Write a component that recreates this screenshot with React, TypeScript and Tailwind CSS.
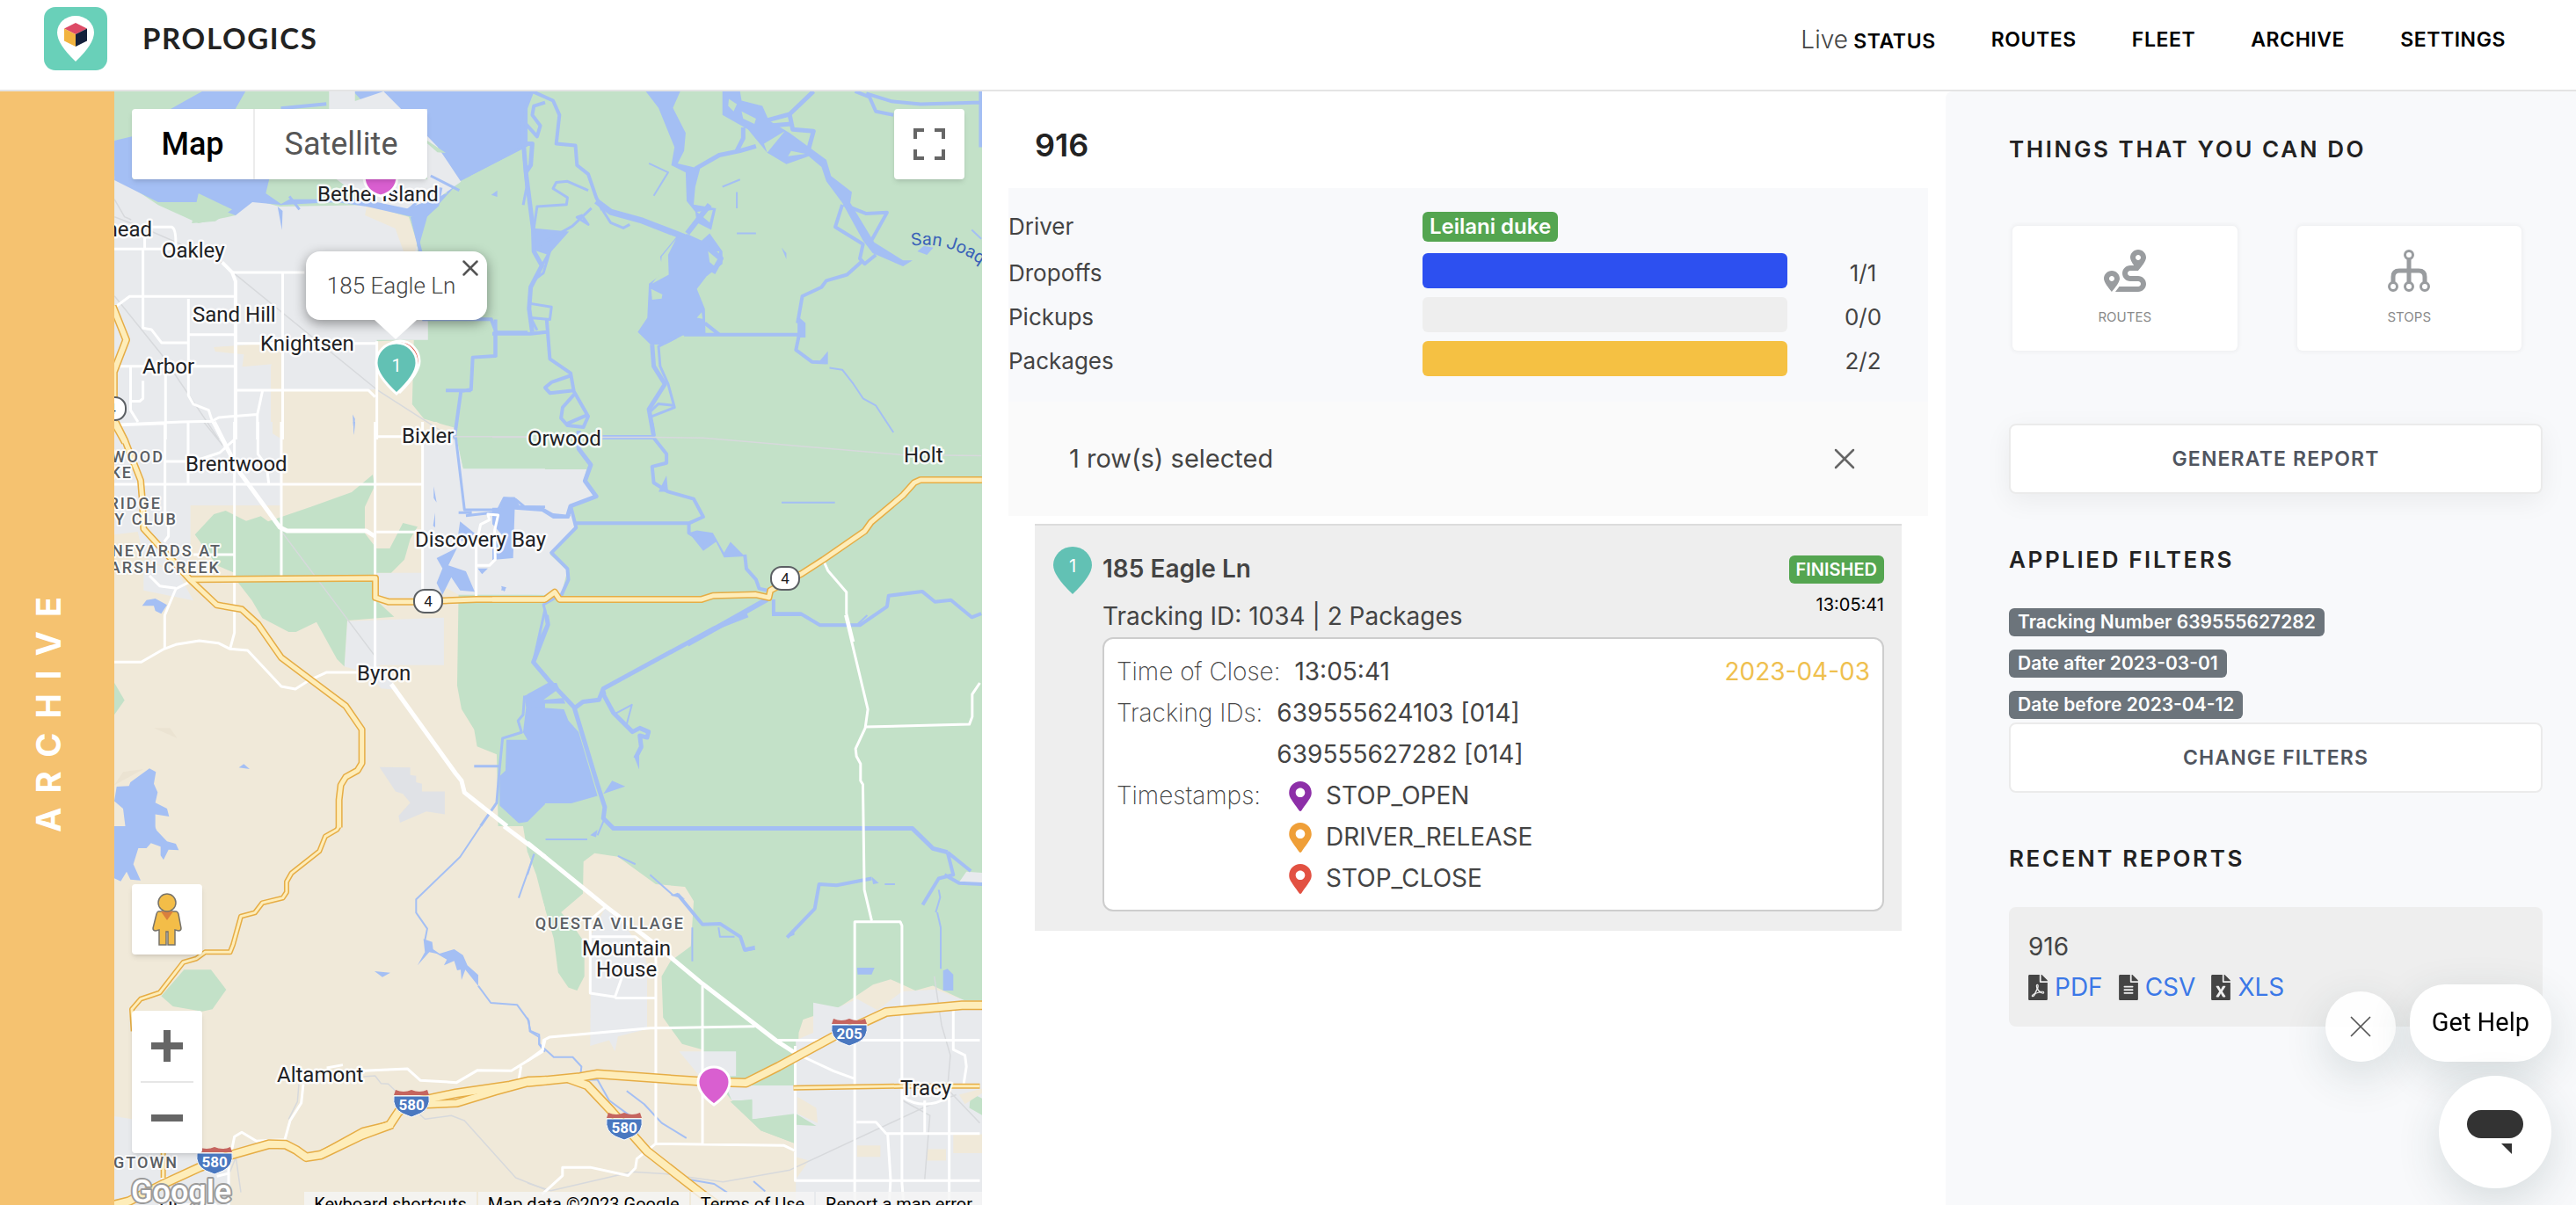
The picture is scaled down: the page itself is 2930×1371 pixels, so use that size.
import type { ReactNode } from "react"
import { X } from "lucide-react"
import { FaFileAlt, FaFileExcel, FaFilePdf, FaMapMarkerAlt, FaRoute } from "react-icons/fa"

const PARK = "#c3e1c8"
const SAND = "#f0e9d9"
const TOWN = "#e8eaed"
const WATER = "#a4bff4"

// every tile has its own drawing units, these place them on the map
const tiles = {
  nw: "scale(.3827 .3333)",
  ne: "translate(560 90) scale(.3635 .4082)",
  w: "translate(120 480) scale(.3333)",
  se: "translate(600 700) scale(.3317 .4279)",
  sw: "translate(120 940) scale(.3333)",
}

type Tile = keyof typeof tiles

const areas: [Tile, string, string][] = [
  // land
  ["nw", TOWN, "M340 600L470 700 590 762 700 735 750 680 830 705 1090 700 1180 730 1250 860 1272 1100V1160H1120V1500H340Z"],
  ["nw", SAND, "M1090 700L1215 740 1240 830 1225 900 1200 860 1175 780 1085 735Z"],
  ["nw", SAND, "M635 1185L820 1170 840 1240 720 1252 725 1210 640 1200ZM805 1250L840 1170V1330H1115L1120 1165 1230 1160 1225 1380 1260 1430 1350 1460V1500H805Z"],
  ["w", SAND, "M30 0H1130L1190 40 1220 160 1205 580 1200 900 1215 980 1258 1050 1268 1108 1335 1135 1340 1380H30Z"],
  ["w", TOWN, "M30 0H570V40L603 60V285H290V460L250 520 130 460 110 375 30 385ZM130 470L250 520 300 610 130 575Z"],
  ["w", TOWN, "M1085 40H1195L1220 160H1500V590H1205L1150 560V600H925V515H1080Z"],
  ["ne", TOWN, "M0 1088H295L285 1120 325 1165 240 1190 265 1250 180 1325 235 1370 215 1440 0 1430Z"],
  ["w", TOWN, "M825 680L1155 668V830H930L1000 915 940 910 900 860 815 835Z"],
  ["w", "#e0e2e6", "M935 1178L1040 1180V1205L1060 1208V1230L1080 1235V1262H1158V1340L1095 1330 1005 1368 1000 1345 1040 1300 1015 1270 990 1262Z"],
  ["w", PARK, "M305 385L370 315 410 303 480 338 530 322 555 340 700 290 840 240 912 180 918 220 885 290V380L925 432H970L1015 345 1065 358 1040 400 1020 470 975 515H925V610L985 665 825 678 815 835 790 810 720 683 650 717H625L535 670 500 610 450 545 440 515 380 490Z"],
  ["w", PARK, "M30 890L65 950 30 1000Z"],
  ["w", "#ebe3d2", "M165 1045H220L245 1080ZM60 1195L130 1185 30 1240Z"],
  ["sw", SAND, "M30 0H1425L1440 90 1500 280V1293H30Z"],
  ["sw", PARK, "M190 580L268 490H360L412 558 365 625 330 632 230 615Z"],
  ["sw", TOWN, "M30 990L90 1000V1100H340L425 1180V1293H30Z"],
  ["se", SAND, "M0 630L30 690 60 780 90 860 105 950 140 990 170 998 195 960V870L160 830 115 790 190 740 192 655 230 633 310 642 440 715 540 722 570 760 560 880 490 920 460 960 465 1070 530 1140 600 1155 640 1230 700 1290 800 1370 920 1405V1568H0Z"],
  ["se", SAND, "M930 1110L945 1075 1070 1042 1185 982 1245 968 1330 998 1390 985 1500 1025H1560V1568H920V1350Z"],
  ["se", TOWN, "M980 1030L1065 1043 1130 1020 1200 1050 1285 1000 1400 995 1500 1025H1560V1568H920V1330L770 1340V1290H700L680 1250H920V1130L980 1110Z"],
  ["se", TOWN, "M520 1160H715V1225H590ZM218 850L265 780 330 820 400 900 410 930V1100L310 1120 300 1160 280 1130 215 1145Z"],
  ["se", PARK, "M695 1293L770 1287V1340L920 1325 990 1358 920 1355V1405L800 1370ZM1520 1270L1560 1285V1330L1515 1310Z"],
  ["se", SAND, "M920 1440L965 1450 920 1500ZM925 1280L990 1310 995 1350 925 1325ZM1130 1410H1210V1440H1130ZM1370 1420H1435V1450H1370ZM1460 1380H1560V1430H1460ZM1480 1275L1560 1258V1270L1500 1300Z"],
  // water
  ["nw", WATER, "M600 312H730L700 372H500ZM340 480L395 465V612H800L790 660 840 700 750 690 700 735 600 690 470 690 340 615Z"],
  ["nw", PARK, "M730 312H975V360L850 372H700ZM340 312H600L340 480ZM590 660L690 715 640 755 570 762Z"],
  ["nw", WATER, "M1050 312H1568V500L1365 620 1270 740 1250 860 1225 740 1090 705 1000 690 830 700 860 680 1060 680 1200 700 1330 660Z"],
  ["nw", TOWN, "M978 312H1055V345L1140 312 1190 370 1300 500 1370 620 1310 670 1210 712 1080 680 1000 612H1270V372H978Z"],
  ["nw", PARK, "M1270 480L1325 522 1300 520 1270 490ZM1568 500L1400 600 1270 740 1240 860 1440 880H1568Z"],
  ["nw", WATER, "M825 705L840 720 838 785ZM1048 1415L1055 1430 1052 1485ZM1460 665L1478 650 1478 672Z"],
  ["ne", WATER, "M0 34H125L90 120 85 190 0 230ZM480 34H588L565 80 605 150 600 200 580 235 650 250 635 300 630 350 700 360 685 420 640 400 635 370 608 340 605 260 560 240 570 190 520 80ZM720 34H775L780 60 845 75 865 115 930 150 1045 225 1060 270 1125 315 1120 345 1195 455 1285 505 1315 505 1285 522 1190 485 1160 450 1095 345 1045 285 1030 245 990 215 920 237 860 205 800 140 720 100Z"],
  ["ne", PARK, "M740 55L765 70 755 90 738 75ZM780 90L825 110 820 125 785 110ZM850 180L915 145 860 205ZM935 200L980 208 925 215ZM945 140L990 140 985 180ZM640 370L690 365 680 400Z"],
  ["ne", WATER, "M580 435L610 432 655 450 680 430 720 480 720 515 670 550 640 585 665 640 667 710 595 715 540 740 495 740 455 705 485 665 490 570 535 540 525 495ZM125 415L240 425 175 490 125 475Z"],
  ["ne", PARK, "M575 445L550 490 552 545 500 570 525 540 530 495ZM497 585L532 600 530 612 500 615ZM640 665L655 650 658 668ZM675 480L710 480 700 525 680 510ZM375 370L410 385 405 405 380 398Z"],
  ["ne", WATER, "M35 1165H70L85 1188 150 1190 190 1210 245 1215 240 1225 190 1225 155 1205 70 1200 65 1335 0 1340V1290L40 1280 0 1240V1195H25ZM615 1265L640 1258 690 1265 725 1320 745 1290 790 1330 725 1333 700 1290 660 1315ZM1020 790L1050 758V795ZM1330 480L1350 465 1380 470 1360 490ZM545 1105L550 1150 520 1150ZM30 1415L42 1425 28 1425ZM955 660L980 680V720H955ZM905 470L920 485V502Z"],
  ["w", WATER, "M1210 340L1260 380 1240 400 1200 410ZM1130 465L1200 430 1170 490 1230 510 1260 580 1210 575 1180 530 1150 590 1130 550 1150 500ZM1350 560L1368 565 1360 580ZM1120 220L1130 275 1120 260ZM1125 310V360L1118 355ZM1270 500H1305L1285 520Z"],
  ["w", WATER, "M125 628L140 608 170 603 210 625 190 655 170 645 165 628ZM455 1180L472 1168 492 1185ZM845 0H852L848 45ZM30 1295L38 1245 80 1243 85 1230 150 1183 172 1195 165 1235 178 1265 170 1300 210 1320 217 1347 170 1340V1400H70L60 1320Z"],
  ["w", WATER, "M1500 900L1430 935 1435 975 1425 1060 1440 1085H1368L1365 1190 1345 1210V1310L1410 1370 1440 1365 1500 1305Z"],
  ["se", WATER, "M0 243L125 250 140 280 175 310 240 480 150 500H50L0 545ZM0 210L70 180 100 180 130 235 30 235ZM240 220L265 195 270 210ZM290 440L335 455 260 475ZM365 375L383 360V410ZM215 585L240 570 235 590ZM1130 937H1190L1180 955H1132ZM1425 945L1440 940 1460 955V998H1425ZM490 745L515 738 540 755ZM740 885L780 878 775 890 745 895ZM890 857L915 835V850ZM1180 695L1205 712 1185 715Z"],
  ["se", PARK, "M55 225L100 200 120 220Z"],
  ["se", TOWN, "M1480 710L1505 682 1560 685V715Z"],
  ["sw", WATER, "M30 0H168L175 15 210 52 240 60 250 82 215 80 198 115 188 100V70L155 58 140 75H112L95 130 120 185 85 182 72 155 52 188 30 178Z"],
  ["sw", WATER, "M1065 475L1090 430 1085 385 1115 395 1118 420 1140 435 1190 420 1220 440 1235 475 1272 508V545L1228 490 1215 525 1212 490 1200 492 1190 460 1155 475 1165 455 1130 435 1105 430ZM918 495L972 500 945 515Z"],
]

const streams: [Tile, number, string][] = [
  ["ne", 4, "M125 34L190 60 210 100 200 180 260 185 265 240 300 265 325 330 345 365"],
  ["ne", 4, "M125 34L105 80 100 120 140 160 150 130 125 100 130 75 165 65"],
  ["ne", 7, "M325 340L370 370 470 395 600 440"],
  ["ne", 3, "M345 365L370 400 410 415 430 405M310 360L250 410 130 470M300 310L235 285 200 288 190 305 235 330 232 350 140 355 130 415M265 385L300 405 280 380Z"],
  ["ne", 5, "M92 120L105 260 128 420 130 480 155 520 120 580 115 640 125 705M100 180H125L120 240 105 260"],
  ["ne", 3, "M155 520L180 480 160 540 130 560M115 625L185 635 180 670 120 665 140 700"],
  ["ne", 4, "M0 710H120L170 705M10 670V775M170 670L180 780 245 820 255 870 300 940 285 970 235 965 215 945 220 915 260 875M250 825L185 845 165 860 180 875 255 868M235 960L300 935"],
  ["ne", 5, "M270 980V1030L308 1075 290 1120 325 1163 245 1190 235 1220"],
  ["ne", 4, "M245 1190L262 1250 185 1320 235 1365 238 1395 215 1440M260 1238H615L660 1220 630 1170 550 1150 505 1125 500 1080 545 1070 545 1045 505 1000 500 960"],
  ["ne", 5, "M500 740L505 800 540 850 490 920 505 995M345 998H505"],
  ["ne", 3, "M575 720L520 745 525 800 550 850 570 915 500 940M490 930L520 905 570 910"],
  ["ne", 4, "M600 712H960L950 755 1000 788 1045 790M665 680L710 712M955 680L970 605 1030 580 1045 562 1110 545 1160 505"],
  ["ne", 5, "M635 250L710 212 775 200 825 187M765 200L785 165V135M860 115L930 98 1005 34M930 98L940 140 1005 145 985 210M870 130L935 125"],
  ["ne", 4, "M1100 350L1170 375 1235 372 1180 460M1095 350L1073 412 1160 460 1150 500 1165 515 1200 490"],
  ["ne", 4, "M1135 34L1180 50 1200 90 1255 100M1170 40L1250 62 1340 70 1530 65M1528 34V190"],
  ["ne", 2, "M490 235L550 260 505 325M720 300L775 280M765 315V360M765 430L825 430M905 1180H1072M1055 805L1095 810 1130 850 1160 890 1200 910 1255 985M1500 420L1530 445"],
  ["ne", 4, "M615 1240V1265L680 1300M790 1325L795 1365 825 1395 835 1420 860 1425M880 1450V1490H965L1025 1522H1150L1235 1470 1240 1440 1345 1428 1385 1457 1435 1452 1500 1500 1530 1490"],
  ["ne", 6, "M860 1450L700 1530 610 1575M675 470L715 500 690 540M610 430L680 350"],
  ["ne", 3, "M210 1440L160 1465 175 1515 145 1568"],
  ["nw", 4, "M1255 1090H1460L1475 1135H1568M1472 1130V1215L1405 1220 1400 1330 1370 1335 1350 1500M1325 1333H1400M1225 740L1250 860M1260 740L1300 700 1310 640M835 370L970 355"],
  ["nw", 3, "M1165 710L1210 720 1240 690M1280 600L1365 650M860 670L890 715M1555 500L1565 640 1555 700"],
  ["w", 3, "M1195 50L1225 300H1340L1360 260 1400 265 1430 290 1500 290M1205 310H1250M1230 320L1320 310"],
  ["w", 3, "M1500 640L1460 820 1500 870M1430 935L1425 1000 1408 1020 1420 1060 1355 1080 1345 1180 1335 1300 1280 1380M1258 1175H1345"],
  ["se", 5, "M65 0L70 25 20 125 75 175 160 245 240 450 265 510 260 540 295 567H1320L1390 620 1440 630"],
  ["se", 5, "M755 0L640 35 260 195 245 225 190 230 165 245M260 210L295 260 360 310 385 300 415 310 410 325 385 320 390 350 370 380"],
  ["se", 2, "M300 262L358 238 340 290M62 596H205M240 585L262 545M838 0H950L1000 25H1130L1165 0M310 640L370 662M420 690L500 745M565 830V920"],
  ["se", 4, "M515 742L600 822 660 820 730 855 745 890 780 885M890 857L985 780 1000 715 1060 718 1180 700M1440 630L1520 680M1440 630L1460 690 1410 700 1355 770M1430 690L1480 712 1560 715"],
  ["se", 2, "M1405 790L1417 830V940M655 830L660 855 710 855M1225 715H1260M1410 730L1415 750 1400 790"],
  ["se", 2, "M0 1070L10 1105 40 1115V1140L90 1175 155 1175 185 1200 180 1235 240 1235 280 1290 350 1330M340 1265L400 1300 460 1350 545 1390M550 1500L640 1512 685 1535M775 1505L815 1532M22 635L0 690"],
  ["sw", 2, "M1280 0L1210 105 1060 250V295L1098 350 1090 390M1272 545L1315 603 1405 610 1445 665 1448 700 1480 720V745L1500 770M1463 95L1410 245"],
]

const rails: [Tile, string][] = [
  ["nw", "M340 680L370 740 390 750M340 740L430 780 650 890 1120 1330 1350 1500M340 1010L480 1210 650 1500"],
  ["w", "M335 0L400 80M605 380L920 800M1190 50H1440"],
  ["ne", "M0 998H500L660 1000 1280 1047 1530 1050"],
  ["sw", "M880 855L920 852 940 878 965 880 1090 1000 1180 988 1225 1005 1400 1200 1500 1240M660 880L655 940 625 1000M425 1180L445 1130 462 1250"],
  ["se", "M0 1510L80 1530 360 1480 470 1485 670 1507 900 1475 1370 1305 1470 1275M1395 960L1420 1090 1450 1170 1440 1260 1551 1350M1285 1290L1380 1330 1362 1500"],
]

const streets: [Tile, number, string][] = [
  ["nw", 3, "M340 850H490M425 850V1120L450 1125 480 1170H560M450 775H510Q525 780 522 850M340 1050L385 1012H700M430 800L430 850M340 1250H700M388 1250V1400L410 1440M425 1300V1360L415 1370 390 1370M492 1280V1500M560 1020V1350L575 1380 620 1400 630 1435 660 1500M560 1142H700M690 930H905M840 930V1500M700 1172H1120M1120 1165V1500M702 1332H1095L1115 1355M340 1450L540 1440 630 1438 650 1425 765 1415 780 1335M765 1415V1500"],
  ["nw", 4, "M490 850L520 845M660 895L690 930 700 960V1500"],
  ["w", 3, "M30 12L200 5M30 213H1085M203 0V330L215 350V390L200 410M282 0V210M205 135H300L390 105 440 60M440 0V720L425 775M600 0V525M520 0V110L550 150 557 210M1082 0V600M920 0V840M925 50H1085M925 376H1080M300 453H440M1265 600V420L1280 350 1310 335 1305 315 1340 318 1328 370 1330 470 1310 490H1265"],
  ["w", 3, "M30 820H122L200 775 240 760 320 747 385 755 425 775 485 780 600 903 648 912 690 885 755 855H870M202 775V660L240 570 290 545M150 525L185 560 240 568"],
  ["w", 5, "M370 0L410 80 460 175 595 360 620 372H890L918 390M975 895L1195 1200 1215 1225 1225 1265 1370 1380M920 840L950 870"],
  ["sw", 5, "M1360 0L1500 105"],
  ["sw", 3, "M755 825L810 815M880 835L1030 828 1075 868 1198 875 1270 833 1385 835 1490 770 1500 730M1418 820L1410 870M675 880L668 945 630 1005 612 1070 515 1075 465 1045 440 1060 430 1110M420 1120V1293M190 1200H270M380 1195L420 1185"],
  ["se", 5, "M0 605L270 775 430 870 600 980 860 1135 920 1165"],
  ["se", 3, "M1090 0L1167 250 1158 300 1125 355 1128 375 1142 395V440L1150 450 1155 730 1180 812M1158 297L1515 290 1525 270V210L1551 180M1122 1568V815H1278L1284 825V1510L1290 1568M600 985V1405M440 905V1405M268 775L215 810V1005L300 1015 325 960M215 855H370L440 900M300 1018H440M0 1185L52 1155 55 1130 75 1122 420 1098 780 1093M850 1130H1551M918 1145V1503H1551M920 1165L1050 1212 1120 1232M440 1405L880 1410 920 1425M1128 1348H1195L1230 1378H1551M1235 1378L1245 1500 1240 1568M1446 1270V1568M1460 1040V1155L1500 1170 1505 1200 1495 1250M1362 1290V1378M1284 1280Q1360 1320 1446 1280M50 1540L120 1490V1468H215L345 1490 370 1470 375 1445 440 1405"],
  ["ne", 3, "M1035 1340L1050 1370 1108 1430V1490L1130 1568"],
]

const highways: [Tile, number, string][] = [
  ["nw", 9, "M335 1045L375 1160 338 1270V1440L372 1510"],
  ["w", 8, "M35 0L65 60 120 200 125 260 130 365 290 540 380 625 465 640 520 690 600 805 820 970 875 1050V1165L860 1190 820 1212 803 1240 797 1290V1385"],
  ["w", 8, "M290 538L921 533V600L965 614H1050L1265 606H1500"],
  ["ne", 8, "M0 1450H165L195 1430 210 1450H655L690 1440 825 1437 865 1445 870 1425 965 1380 1035 1340 1165 1260 1185 1235 1285 1160 1320 1125 1340 1117H1532"],
  ["sw", 6, "M797 0L790 12 750 35 730 85 635 160 618 190V225L605 245 535 262 510 295 462 308 435 405 425 430 340 430 310 452 265 465 185 568 120 590 90 625 95 700M197 1100V1200"],
  ["se", 6, "M912 1257L1280 1252 1551 1252"],
  ["sw", 10, "M1080 950L1200 945 1330 905 1440 875M735 1122L880 1042 980 1018"],
  ["se", 11, "M140 1232L205 1250 290 1320 410 1425 600 1540 650 1568"],
  ["sw", 11, "M20 1295L80 1280 200 1220 320 1165 430 1122 560 1085 615 1087 650 1105 685 1130 735 1122 875 1055 970 1020 1000 975 1060 940 1195 912 1380 885 1445 870 1505 868"],
  ["se", 11, "M0 1242L180 1228 240 1220 600 1240 750 1243 860 1200 1050 1120 1230 1055 1490 1037H1560"],
]

const towns: [string, number, number][] = [
  ["Bethel Island", 361, 229],
  ["Oakley", 184, 293],
  ["Sand Hill", 219, 366],
  ["Knightsen", 296, 399],
  ["Arbor", 162, 425],
  ["Bixler", 457, 504],
  ["Brentwood", 211, 536],
  ["Discovery Bay", 472, 622],
  ["Byron", 406, 774],
  ["Orwood", 600, 507],
  ["Holt", 1028, 526],
  ["Altamont", 315, 1231],
  ["Mountain", 662, 1087],
  ["House", 678, 1111],
  ["Tracy", 1024, 1246],
  ["Ulmar", 181, 1384],
]

const districts: [string, number, number][] = [
  ["WOOD", 187, 526],
  ["KE", 151, 544],
  ["RIDGE", 184, 579],
  ["Y CLUB", 202, 597],
  ["NEYARDS AT", 252, 633],
  ["ARSH CREEK", 251, 652],
  ["QUESTA VILLAGE", 779, 1057],
  ["GTOWN", 203, 1329],
]

function Interstate({ x, y, label }: { x: number; y: number; label: string }) {
  return (
    <g transform={`translate(${x} ${y})`}>
      <path d="M-18 -15Q-9 -11 0 -15Q9 -11 18 -15L20 -9H-20Z" fill="#c5655f" />
      <path d="M-20 -8H20Q22 6 10 12L0 16L-10 12Q-22 6 -20 -8Z" fill="#4a78c0" stroke="#fff" strokeWidth="1" />
      <text y="8" textAnchor="middle" fontSize="17" fontWeight="700" fill="#fff">{label}</text>
    </g>
  )
}

function StateRoute({ x, y, label }: { x: number; y: number; label: string }) {
  return (
    <g transform={`translate(${x} ${y})`}>
      <rect x="-16" y="-13" width="32" height="26" rx="12" fill="#fff" stroke="#5b5f63" strokeWidth="2" />
      <text y="6" textAnchor="middle" fontSize="17" fill="#202124">{label}</text>
    </g>
  )
}

function MapCanvas() {
  return (
    <svg
      viewBox="130 104 987 1267"
      preserveAspectRatio="xMinYMin slice"
      className="absolute inset-0 h-full w-full font-['Roboto',sans-serif]"
      role="img"
      aria-label="Route map"
    >
      <rect x="130" y="104" width="987" height="1267" fill={PARK} />
      {areas.map(([tile, color, d], i) => (
        <path key={i} transform={tiles[tile]} d={d} fill={color} />
      ))}
      <g fill="none" strokeLinejoin="round">
        {streams.map(([tile, width, d], i) => (
          <path key={i} transform={tiles[tile]} d={d} stroke={WATER} strokeWidth={width} vectorEffect="non-scaling-stroke" />
        ))}
        {rails.map(([tile, d], i) => (
          <path key={i} transform={tiles[tile]} d={d} stroke="#d7d9dc" strokeWidth="1.5" vectorEffect="non-scaling-stroke" />
        ))}
        {streets.map(([tile, width, d], i) => (
          <path key={i} transform={tiles[tile]} d={d} stroke="#fff" strokeWidth={width} vectorEffect="non-scaling-stroke" />
        ))}
        {highways.map(([tile, width, d], i) => (
          <path key={i} transform={tiles[tile]} d={d} stroke="#e6ad45" strokeWidth={width} vectorEffect="non-scaling-stroke" />
        ))}
        {highways.map(([tile, width, d], i) => (
          <path key={i} transform={tiles[tile]} d={d} stroke="#feedb9" strokeWidth={width - 3} vectorEffect="non-scaling-stroke" />
        ))}
      </g>

      <g fontSize="24" fill="#202124" stroke="#fff" strokeOpacity=".85" strokeWidth="5" strokeLinejoin="round" paintOrder="stroke">
        <text x="173" y="269" textAnchor="end">head</text>
        {towns.map(([name, x, y]) => (
          <text key={name} x={x} y={y}>{name}</text>
        ))}
      </g>
      <g fontSize="18" fontWeight="500" letterSpacing="2" fill="#5a5e63" stroke="#fff" strokeOpacity=".85" strokeWidth="4" strokeLinejoin="round" paintOrder="stroke">
        {districts.map(([name, x, y]) => (
          <text key={name} x={x} y={y} textAnchor="end">{name}</text>
        ))}
      </g>
      <path id="river" d="M1037 280Q1082 272 1130 312" fill="none" />
      <text fontSize="20" fill="#3a62b8">
        <textPath href="#river">San Joaquin</textPath>
      </text>

      <StateRoute x={127} y={465} label="4" />
      <StateRoute x={487} y={684} label="4" />
      <StateRoute x={893} y={658} label="4" />
      <Interstate x={966} y={1174} label="205" />
      <Interstate x={710} y={1281} label="580" />
      <Interstate x={468} y={1255} label="580" />
      <Interstate x={244} y={1320} label="580" />

      <g stroke="#fff" strokeWidth="3">
        <path d="M433 223Q414 218 414 200A19 17 0 0 1 452 200Q452 218 433 223Z" fill="#d95fd0" />
        <path d="M812 1257Q794 1244 794 1231A18 17 0 0 1 830 1231Q830 1244 812 1257Z" fill="#d95fd0" />
        <path d="M455 446Q433 424 433 411A22 23 0 0 1 477 411Q477 424 455 446Z" fill="#e0473a" />
        <path d="M451 448Q428 427 428 413A23 23 0 0 1 474 413Q474 427 451 448Z" fill="#62c1b4" />
      </g>
      <text x="451" y="423" textAnchor="middle" fontSize="20" fill="#fff">1</text>
      <text x="149" y="1368" fontSize="36" fontWeight="500" fill="#fff" stroke="#9b9b9b" strokeWidth="4" strokeLinejoin="round" paintOrder="stroke">
        Google
      </text>
    </svg>
  )
}

function MapPane() {
  return (
    <section className="relative w-[987px] shrink-0 overflow-hidden font-['Roboto',sans-serif]">
      <MapCanvas />

      <div className="absolute left-[218px] top-[182px] flex h-[78px] w-[206px] items-center justify-center rounded-2xl bg-white pr-3 shadow-[0_4px_14px_rgba(0,0,0,0.4)]">
        <span className="text-[26px] font-light text-[#444]">185 Eagle Ln</span>
        <button aria-label="Close" className="absolute right-1 top-1 text-[#555]">
          <X size={30} strokeWidth={2} />
        </button>
        <svg className="absolute left-[78px] top-full" width="48" height="22" viewBox="0 0 48 22">
          <path d="M0 0H48L24 22Z" fill="#fff" />
        </svg>
      </div>

      <div className="absolute inset-x-5 top-5 flex justify-between">
        <div className="flex h-20 rounded-sm bg-white text-[36px] shadow-md">
          <button className="w-[140px] border-r-2 border-[#ececec] font-medium text-black">Map</button>
          <button className="w-[196px] text-[#565656]">Satellite</button>
        </div>
        <button aria-label="Toggle fullscreen" className="flex h-20 w-20 items-center justify-center rounded-sm bg-white shadow-md">
          <svg width="36" height="36" viewBox="0 0 36 36" fill="none" stroke="#666" strokeWidth="4">
            <path d="M2 12V2H12M24 2H34V12M34 24V34H24M12 34H2V24" />
          </svg>
        </button>
      </div>

      <div className="absolute bottom-[59px] left-5 flex w-20 flex-col gap-16">
        <button aria-label="Street View" className="flex h-20 items-center justify-center rounded-sm bg-white shadow-md">
          <svg width="34" height="60" viewBox="0 0 34 60" stroke="#77736a" strokeWidth="1.5">
            <path d="M7 21H27Q29 21 30 24L33 40Q33 43 30 43L26 42V59H18V44H16V59H8V42L4 43Q1 43 1 40L5 24Q6 21 7 21Z" fill="#f3bd48" />
            <path d="M10 21H24L17 31Z" fill="#d97f3d" stroke="none" />
            <circle cx="17" cy="11" r="10" fill="#f3bd48" />
          </svg>
        </button>
        <div className="flex h-[162px] flex-col items-center rounded-sm bg-white shadow-md">
          <button aria-label="Zoom in" className="flex w-full flex-1 items-center justify-center">
            <svg width="36" height="36" viewBox="0 0 36 36" fill="#666">
              <path d="M14 0H22V14H36V22H22V36H14V22H0V14H14Z" />
            </svg>
          </button>
          <div className="h-0.5 w-15 bg-[#e6e6e6]" />
          <button aria-label="Zoom out" className="flex w-full flex-1 items-center justify-center">
            <svg width="36" height="8" viewBox="0 0 36 8" fill="#666">
              <path d="M0 0H36V8H0Z" />
            </svg>
          </button>
        </div>
      </div>

      <div className="absolute -bottom-[13px] right-0 flex h-7 gap-0.5 text-[20px] leading-7 text-black">
        <button className="bg-[#f5f5f5]/80 px-[11px]">Keyboard shortcuts</button>
        <span className="bg-[#f5f5f5]/80 px-[11px]">Map data ©2023 Google</span>
        <a href="#terms" className="bg-[#f5f5f5]/80 px-[11px]">Terms of Use</a>
        <a href="#report" className="bg-[#f5f5f5]/80 px-[11px]">Report a map error</a>
      </div>
    </section>
  )
}

function Logo() {
  return (
    <svg width="72" height="72" viewBox="0 0 72 72">
      <rect width="72" height="72" rx="13" fill="#69d0b9" />
      <path d="M36 62Q15 42 15 29A21 19 0 0 1 57 29Q57 42 36 62Z" fill="#fff" />
      <path d="M36 18L49 24.500L36 31L23 24.500Z" fill="#dd4b66" />
      <path d="M23 24.500L36 31V45L23 38.500Z" fill="#f2b440" />
      <path d="M49 24.500L36 31V45L49 38.500Z" fill="#14213b" />
    </svg>
  )
}

const navItems = ["ROUTES", "FLEET", "ARCHIVE", "SETTINGS"]

function Header() {
  return (
    <header className="flex h-[104px] shrink-0 items-start justify-between border-b-2 border-[#e4e4e4] bg-white pl-[50px] pr-20 pt-2">
      <a href="#home" className="flex items-center gap-10">
        <Logo />
        <span className="font-['Lato',sans-serif] text-[33px] font-bold tracking-wider text-[#222]">PROLOGICS</span>
      </a>
      <nav className="flex gap-[63px] pt-[21px] text-[23px] font-semibold leading-8 tracking-wide text-black">
        <a href="#status">
          <span className="text-[28px] font-light tracking-normal text-[#444]">Live</span> STATUS
        </a>
        {navItems.map((item) => (
          <a key={item} href={`#${item.toLowerCase()}`}>{item}</a>
        ))}
      </nav>
    </header>
  )
}

const progress = [
  { label: "Dropoffs", value: "1/1", bar: "bg-[#2d50f0]" },
  { label: "Pickups", value: "0/0", bar: "bg-[#eeeeee]" },
  { label: "Packages", value: "2/2", bar: "bg-[#f5c143]" },
]

const timestamps = [
  { label: "STOP_OPEN", color: "text-[#8d2fa8]" },
  { label: "DRIVER_RELEASE", color: "text-[#ef9f38]" },
  { label: "STOP_CLOSE", color: "text-[#e25142]" },
]

function RouteSummary() {
  return (
    <div className="mx-[14px] bg-[#f8f9fb] pb-6 pt-[27px] text-[26px] leading-[34px] text-[#444]">
      <table className="w-full table-fixed border-collapse">
        <colgroup>
          <col className="w-[471px]" />
          <col />
          <col className="w-[160px]" />
        </colgroup>
        <tbody>
          <tr className="h-[42px] align-top">
            <th scope="row" className="p-0 text-left font-normal">Driver</th>
            <td className="p-0" colSpan={2}>
              <span className="block w-fit rounded-md bg-[#54a550] px-2 text-[24px] font-semibold text-white">Leilani duke</span>
            </td>
          </tr>
          {progress.map((row) => (
            <tr key={row.label} className="h-[50px]">
              <th scope="row" className="p-0 pt-1.5 text-left font-normal">{row.label}</th>
              <td className="p-0">
                <div className={`h-10 rounded-md ${row.bar}`} />
              </td>
              <td className="p-0 pl-3 pt-1.5 text-center">{row.value}</td>
            </tr>
          ))}
        </tbody>
      </table>
    </div>
  )
}

function StopCard() {
  return (
    <article className="mx-11 mt-[9px] border-t-2 border-[#dcdcdc] bg-[#eeeeee] pb-[22px] pl-[21px] pr-5 pt-[23px] text-[#444]">
      <div className="flex gap-3">
        <svg width="44" height="56" viewBox="0 0 44 56">
          <path d="M22 55Q0 34 0 22A22 21 0 0 1 44 22Q44 34 22 55Z" fill="#62c1b4" />
          <text x="22" y="30" textAnchor="middle" fontSize="20" fill="#fff">1</text>
        </svg>
        <div className="flex flex-1 flex-col">
          <div className="flex justify-between">
            <div className="flex flex-col gap-2.5 pb-0.5 pt-1 leading-[44px]">
              <h2 className="text-[28px] font-semibold">185 Eagle Ln</h2>
              <p className="text-[28px]">Tracking ID: 1034 | 2 Packages</p>
            </div>
            <div className="flex flex-col items-end pt-[11px] text-[20px]">
              <span className="rounded-md bg-[#54a550] px-2 font-semibold leading-8 text-white">FINISHED</span>
              <span className="pt-2 leading-8 text-black">13:05:41</span>
            </div>
          </div>
          <div className="flex justify-between rounded-xl border-2 border-[#cdcdcd] bg-white px-[14px] pb-3 pt-[14px] text-[28px] leading-[47px]">
            <dl className="flex flex-col">
              <div className="flex gap-4">
                <dt className="font-extralight">Time of Close:</dt>
                <dd>13:05:41</dd>
              </div>
              <div className="flex gap-4">
                <dt className="font-extralight">Tracking IDs:</dt>
                <dd>
                  639555624103 [014]
                  <br />
                  639555627282 [014]
                </dd>
              </div>
              <div className="flex gap-8">
                <dt className="font-extralight">Timestamps:</dt>
                <dd>
                  {timestamps.map((stamp) => (
                    <div key={stamp.label} className="flex items-center gap-4">
                      <FaMapMarkerAlt size={34} className={`w-[26px] ${stamp.color}`} />
                      {stamp.label}
                    </div>
                  ))}
                </dd>
              </div>
            </dl>
            <time className="text-[#efc04f]">2023-04-03</time>
          </div>
        </div>
      </div>
    </article>
  )
}

function RouteDetails() {
  return (
    <main className="min-w-0 flex-1 bg-white pl-4 pr-1.5">
      <h1 className="px-11 pb-6 pt-9 text-[36px] font-semibold leading-[50px] text-[#222]">916</h1>
      <RouteSummary />
      <div className="mx-[14px] flex h-[130px] items-center justify-between bg-[#fafafa] pl-[69px] pr-[75px] text-[29px] text-[#444]">
        1 row(s) selected
        <button aria-label="Clear selection" className="text-[#666]">
          <X size={40} strokeWidth={1.5} />
        </button>
      </div>
      <StopCard />
    </main>
  )
}

function StopsIcon() {
  return (
    <svg width="48" height="48" viewBox="0 0 48 48" fill="none" stroke="currentColor">
      <g strokeWidth="3">
        <circle cx="24" cy="6" r="4.500" />
        <circle cx="6" cy="42" r="4.500" />
        <circle cx="24" cy="42" r="4.500" />
        <circle cx="42" cy="42" r="4.500" />
      </g>
      <path d="M24 11V37M6 37V31Q6 24 13 24H35Q42 24 42 31V37" strokeWidth="5" />
    </svg>
  )
}

function ActionCard({ label, children }: { label: string; children: ReactNode }) {
  return (
    <button className="flex h-[142px] flex-col items-center rounded-md bg-white pt-[27px] text-[#999c9f] shadow-[0_0_4px_2px_rgba(0,0,0,0.04)]">
      {children}
      <span className="pt-[17px] text-[15px] leading-6 text-[#8a8a8a]">{label}</span>
    </button>
  )
}

const filters = ["Tracking Number 639555627282", "Date after 2023-03-01", "Date before 2023-04-12"]

const buttonClass =
  "h-20 w-full rounded-lg border-2 border-[#ebebeb] bg-white text-[23px] font-semibold tracking-wider text-[#50555f]"
const headingClass = "text-[26px] font-semibold leading-10 tracking-widest text-[#222]"

function Sidebar() {
  return (
    <aside className="w-[717px] shrink-0 rounded-tl-lg bg-[#f8f9fb] pl-[72px] pr-[38px] pt-[46px]">
      <h2 className={headingClass}>THINGS THAT YOU CAN DO</h2>
      <div className="grid grid-cols-2 gap-[68px] pb-[83px] pl-1 pr-6 pt-[67px]">
        <ActionCard label="ROUTES">
          <FaRoute size={48} />
        </ActionCard>
        <ActionCard label="STOPS">
          <StopsIcon />
        </ActionCard>
      </div>
      <button className={`${buttonClass} shadow-[0_8px_30px_rgba(0,0,0,0.06)]`}>GENERATE REPORT</button>

      <h2 className={`${headingClass} pb-[35px] pt-[55px]`}>APPLIED FILTERS</h2>
      <ul className="flex flex-col items-start gap-[15px] pb-1">
        {filters.map((filter) => (
          <li key={filter} className="rounded-md bg-[#6c747b] px-2.5 text-[21px] font-semibold leading-8 text-white">{filter}</li>
        ))}
      </ul>
      <button className={buttonClass}>CHANGE FILTERS</button>

      <h2 className={`${headingClass} pb-[35px] pt-[55px]`}>RECENT REPORTS</h2>
      <div className="rounded-lg bg-[#eeeeee] p-[22px] text-[28px] leading-[46px] text-[#444]">
        <p>916</p>
        <div className="flex gap-[18px]">
          <a href="#pdf" className="flex items-center gap-2 text-[#3b78e7]">
            <FaFilePdf size={29} className="w-[22px] text-[#444]" />
            PDF
          </a>
          <a href="#csv" className="flex items-center gap-2 text-[#3b78e7]">
            <FaFileAlt size={29} className="w-[22px] text-[#444]" />
            CSV
          </a>
          <a href="#xls" className="flex items-center gap-2 text-[#3b78e7]">
            <FaFileExcel size={29} className="w-[22px] text-[#444]" />
            XLS
          </a>
        </div>
      </div>
    </aside>
  )
}

function ChatWidget() {
  return (
    <div className="fixed bottom-[19px] right-7 flex flex-col items-end gap-4">
      <div className="flex items-end gap-4">
        <button aria-label="Dismiss" className="flex h-20 w-20 items-center justify-center rounded-full bg-white/90 text-[#555] shadow-[0_16px_50px_rgba(40,70,70,0.16)]">
          <X size={42} strokeWidth={1} />
        </button>
        <button className="h-[88px] rounded-[40px] bg-white px-[25px] font-['Roboto',sans-serif] text-[29px] text-black shadow-[0_16px_50px_rgba(40,70,70,0.16)]">
          Get Help
        </button>
      </div>
      <button aria-label="Open chat" className="flex h-32 w-32 items-center justify-center rounded-full bg-white shadow-[0_16px_50px_rgba(40,70,70,0.16)]">
        <svg width="64" height="50" viewBox="0 0 64 50" fill="#333">
          <rect width="64" height="32" rx="16" />
          <path d="M39 38H51V50Z" />
        </svg>
      </button>
    </div>
  )
}

export default function App() {
  return (
    <div className="flex h-screen flex-col overflow-hidden bg-white font-['Inter',sans-serif]">
      <Header />
      <div className="flex min-h-0 flex-1">
        <div className="flex w-[130px] shrink-0 items-center justify-center bg-[#f5c270] pr-5 pt-[134px]">
          <span className="rotate-180 text-[38px] font-bold tracking-[16px] text-white [writing-mode:vertical-rl]">ARCHIVE</span>
        </div>
        <MapPane />
        <RouteDetails />
        <Sidebar />
      </div>
      <ChatWidget />
    </div>
  )
}
